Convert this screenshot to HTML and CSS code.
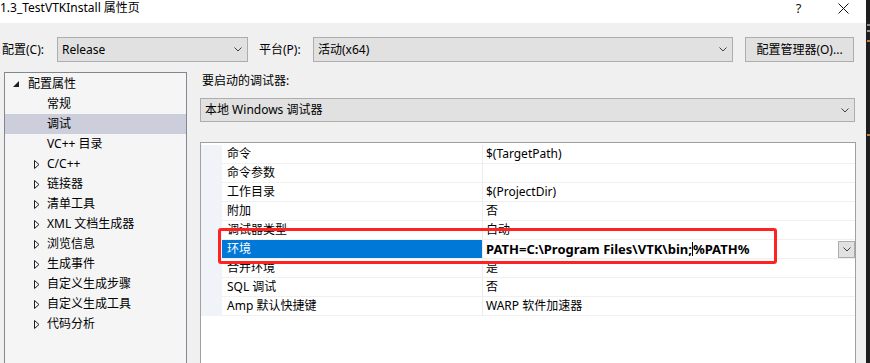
FILE: index.html
```html
<!DOCTYPE html>
<html lang="zh-CN">
<head>
  <meta charset="UTF-8">
  <title>1.3_TestVTKInstall 属性页</title>
  <link rel="stylesheet" href="styles.css">
</head>
<body>
  <div class="window">
    <div class="dialog">
      <div class="titlebar">
        <span class="title">1.3_TestVTKInstall 属性页</span>
        <div class="caption-btns">
          <span class="cap-btn help">?</span>
          <span class="cap-btn">
            <svg width="11" height="11" viewBox="0 0 11 11"><path d="M0.5 0.5 L10.5 10.5 M10.5 0.5 L0.5 10.5" stroke="#111" stroke-width="1" fill="none"/></svg>
          </span>
        </div>
      </div>

      <div class="config-row">
        <span class="label label-config">配置(C):</span>
        <div class="select select-config">
          <span>Release</span>
          <svg class="chev" width="8" height="5" viewBox="0 0 8 5"><path d="M0.5 0.5 L4 4 L7.5 0.5" stroke="#404040" fill="none"/></svg>
        </div>
        <span class="label label-platform">平台(P):</span>
        <div class="select select-platform">
          <span>活动(x64)</span>
          <svg class="chev" width="8" height="5" viewBox="0 0 8 5"><path d="M0.5 0.5 L4 4 L7.5 0.5" stroke="#404040" fill="none"/></svg>
        </div>
        <div class="btn">配置管理器(O)...</div>
      </div>

      <div class="panes">
        <div class="tree">
          <div class="tree-item root">
            <span class="arrow"><svg width="6" height="6" viewBox="0 0 6 6"><polygon points="6,0 6,6 0,6" fill="#1e1e1e"/></svg></span>
            <span>配置属性</span>
          </div>
          <div class="tree-item"><span class="arrow"></span><span>常规</span></div>
          <div class="tree-item selected"><span class="arrow"></span><span>调试</span></div>
          <div class="tree-item"><span class="arrow"></span><span>VC++ 目录</span></div>
          <div class="tree-item"><span class="arrow"><svg class="tri" width="6" height="9" viewBox="0 0 6 9"><polygon points="0.5,0.5 5,4.5 0.5,8.5" fill="none" stroke="#1e1e1e"/></svg></span><span>C/C++</span></div>
          <div class="tree-item"><span class="arrow"><svg class="tri" width="6" height="9" viewBox="0 0 6 9"><polygon points="0.5,0.5 5,4.5 0.5,8.5" fill="none" stroke="#1e1e1e"/></svg></span><span>链接器</span></div>
          <div class="tree-item"><span class="arrow"><svg class="tri" width="6" height="9" viewBox="0 0 6 9"><polygon points="0.5,0.5 5,4.5 0.5,8.5" fill="none" stroke="#1e1e1e"/></svg></span><span>清单工具</span></div>
          <div class="tree-item"><span class="arrow"><svg class="tri" width="6" height="9" viewBox="0 0 6 9"><polygon points="0.5,0.5 5,4.5 0.5,8.5" fill="none" stroke="#1e1e1e"/></svg></span><span>XML 文档生成器</span></div>
          <div class="tree-item"><span class="arrow"><svg class="tri" width="6" height="9" viewBox="0 0 6 9"><polygon points="0.5,0.5 5,4.5 0.5,8.5" fill="none" stroke="#1e1e1e"/></svg></span><span>浏览信息</span></div>
          <div class="tree-item"><span class="arrow"><svg class="tri" width="6" height="9" viewBox="0 0 6 9"><polygon points="0.5,0.5 5,4.5 0.5,8.5" fill="none" stroke="#1e1e1e"/></svg></span><span>生成事件</span></div>
          <div class="tree-item"><span class="arrow"><svg class="tri" width="6" height="9" viewBox="0 0 6 9"><polygon points="0.5,0.5 5,4.5 0.5,8.5" fill="none" stroke="#1e1e1e"/></svg></span><span>自定义生成步骤</span></div>
          <div class="tree-item"><span class="arrow"><svg class="tri" width="6" height="9" viewBox="0 0 6 9"><polygon points="0.5,0.5 5,4.5 0.5,8.5" fill="none" stroke="#1e1e1e"/></svg></span><span>自定义生成工具</span></div>
          <div class="tree-item"><span class="arrow"><svg class="tri" width="6" height="9" viewBox="0 0 6 9"><polygon points="0.5,0.5 5,4.5 0.5,8.5" fill="none" stroke="#1e1e1e"/></svg></span><span>代码分析</span></div>
        </div>

        <div class="page">
          <div class="page-label">要启动的调试器:</div>
          <div class="select select-debugger">
            <span>本地 Windows 调试器</span>
            <svg class="chev" width="8" height="5" viewBox="0 0 8 5"><path d="M0.5 0.5 L4 4 L7.5 0.5" stroke="#404040" fill="none"/></svg>
          </div>

          <div class="grid">
            <div class="row"><span class="gutter"></span><span class="name">命令</span><span class="value">$(TargetPath)</span></div>
            <div class="row"><span class="gutter"></span><span class="name">命令参数</span><span class="value"></span></div>
            <div class="row"><span class="gutter"></span><span class="name">工作目录</span><span class="value">$(ProjectDir)</span></div>
            <div class="row"><span class="gutter"></span><span class="name">附加</span><span class="value">否</span></div>
            <div class="row"><span class="gutter"></span><span class="name">调试器类型</span><span class="value">自动</span></div>
            <div class="row active">
              <span class="gutter"></span>
              <span class="name">环境</span>
              <span class="value">
                <b>PATH=C:\Program Files\VTK\bin;</b><i class="caret"></i><b>%PATH%</b>
                <span class="drop"><svg width="8" height="5" viewBox="0 0 8 5"><path d="M0.5 0.5 L4 4 L7.5 0.5" stroke="#404040" fill="none"/></svg></span>
              </span>
            </div>
            <div class="row"><span class="gutter"></span><span class="name">合并环境</span><span class="value">是</span></div>
            <div class="row"><span class="gutter"></span><span class="name">SQL 调试</span><span class="value">否</span></div>
            <div class="row"><span class="gutter"></span><span class="name">Amp 默认快捷键</span><span class="value">WARP 软件加速器</span></div>

            <div class="highlight"></div>
          </div>
        </div>
      </div>
    </div>
    <div class="edge">
      <i class="mark m1"></i>
      <i class="mark m2"></i>
      <i class="mark m3"></i>
      <i class="mark m4"></i>
    </div>
  </div>
</body>
</html>
```

FILE: styles.css
```css
body {
  margin: 0;
  width: 870px;
  height: 363px;
  overflow: hidden;
  font-family: "Noto Sans", "Noto Sans CJK SC", sans-serif;
  font-size: 12px;
  color: #000;
  background: #1e1e1e;
}
.window {
  display: flex;
  height: 363px;
}
.dialog {
  width: 866px;
  height: 363px;
  overflow: hidden;
  background-color: #f0f0f0;
  display: flex;
  flex-direction: column;
}

/* title bar */
.titlebar {
  height: 23px;
  flex-shrink: 0;
  background-color: #fff;
  display: flex;
  align-items: flex-start;
}
.title {
  line-height: 15px;
}
.caption-btns {
  margin-left: auto;
  display: flex;
}
.cap-btn {
  width: 45px;
  height: 16px;
  display: flex;
  justify-content: center;
  align-items: center;
  color: #111;
}
.cap-btn.help {
  font-size: 13px;
  line-height: 18px;
  height: 18px;
  margin-top: -1px;
}

/* config row */
.config-row {
  display: flex;
  align-items: center;
  height: 25px;
  margin-top: 14px;
  flex-shrink: 0;
}
.label {
  line-height: 25px;
}
.label-config {
  width: 55px;
  padding-left: 2px;
}
.label-platform {
  width: 54px;
  margin-left: 11px;
}
.select {
  box-sizing: border-box;
  height: 25px;
  border: 1px solid #adadad;
  background-color: #e1e1e1;
  display: flex;
  align-items: center;
  padding: 0 5px 0 4px;
  line-height: 23px;
}
.select .chev {
  margin-left: auto;
}
.select-config {
  width: 191px;
}
.select-platform {
  width: 420px;
}
.btn {
  box-sizing: border-box;
  width: 109px;
  height: 25px;
  margin-left: 12px;
  border: 1px solid #adadad;
  background-color: #e1e1e1;
  text-align: center;
  line-height: 23px;
}

/* panes */
.panes {
  display: flex;
  margin-top: 10px;
  align-items: flex-start;
}
.tree {
  box-sizing: border-box;
  width: 183px;
  height: 320px;
  margin-left: 4px;
  padding-top: 1px;
  border: 1px solid #828790;
  background-color: #f5f5f5;
}
.tree-item {
  display: flex;
  align-items: center;
  height: 20px;
  line-height: 20px;
  padding-left: 29px;
}
.tree-item .arrow {
  width: 13px;
  display: flex;
  align-items: center;
}
.tree-item.root {
  padding-left: 8px;
}
.tree-item.root .arrow {
  width: 15px;
  padding-bottom: 1px;
}
.tree-item.selected {
  background-color: #cccedb;
}

.page {
  width: 656px;
  margin-left: 13px;
}
.page-label {
  line-height: 17px;
  padding-left: 2px;
}
.select-debugger {
  width: 655px;
  height: 24px;
  margin-top: 9px;
  line-height: 22px;
}

/* property grid */
.grid {
  position: relative;
  box-sizing: border-box;
  height: 240px;
  margin-top: 20px;
  padding-top: 2px;
  border: 1px solid #a0a0a0;
  background-color: #fff;
}
.row {
  display: grid;
  grid-template-columns: 21px 260px 1fr;
  height: 19px;
}
.row .gutter {
  background-color: #f0f4f9;
}
.row .name,
.row .value {
  box-sizing: border-box;
  height: 19px;
  line-height: 18px;
  border-bottom: 1px solid #f0f0f0;
  white-space: nowrap;
}
.row .name {
  padding-left: 5px;
}
.row .value {
  display: flex;
  align-items: center;
  padding-left: 3px;
  border-left: 1px solid #ececec;
}
.row.active .name {
  background-color: #0078d7;
  color: #fff;
}
.row.active b {
  font-weight: bold;
  font-size: 13px;
}
.caret {
  display: inline-block;
  width: 1px;
  height: 14px;
  background-color: #000;
}
.drop {
  box-sizing: border-box;
  width: 17px;
  height: 17px;
  margin-left: auto;
  border: 1px solid #adadad;
  background-color: #e1e1e1;
  display: flex;
  justify-content: center;
  align-items: center;
}

/* red annotation box */
.highlight {
  position: absolute;
  left: 17px;
  top: 85px;
  width: 559px;
  height: 36px;
  box-sizing: border-box;
  border: 3px solid #ff2222;
  border-radius: 3px;
}

/* editor edge behind the dialog */
.edge {
  width: 4px;
  display: flex;
  flex-direction: column;
}
.mark {
  display: block;
  width: 3px;
  height: 2px;
  margin-left: 1px;
}
.m1 { margin-top: 24px; background: #8a8a8a; }
.m2 { margin-top: 4px; background: #9a9a9a; }
.m3 { margin-top: 8px; background: #c08040; }
.m4 { margin-top: 92px; background: #c08040; }
```
